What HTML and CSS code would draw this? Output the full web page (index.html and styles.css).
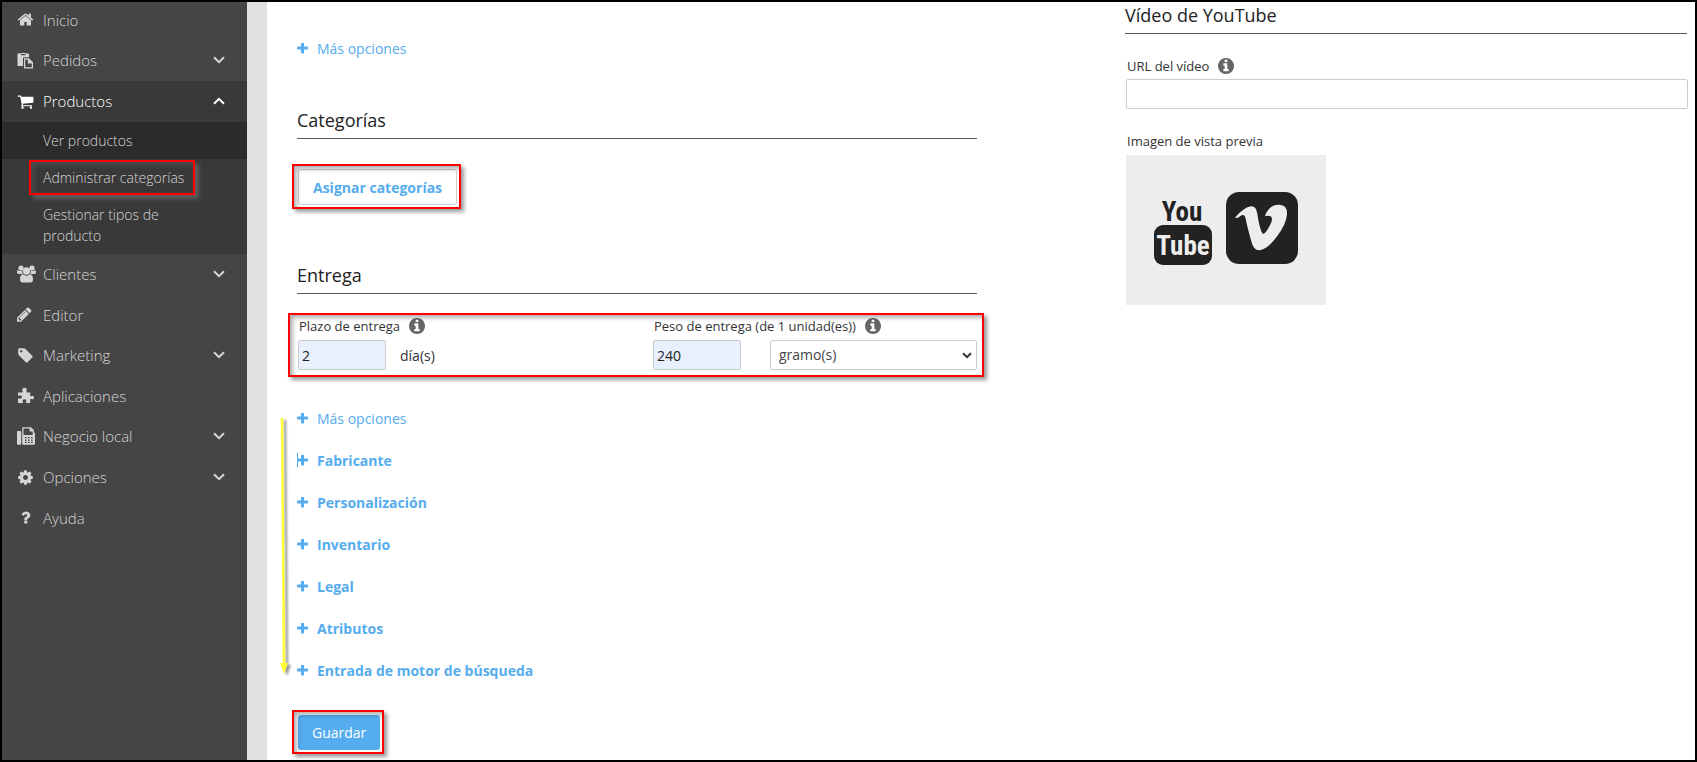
FILE: index.html
```
<!DOCTYPE html>
<html lang="es">
<head>
    <meta charset="UTF-8">
    <meta name="viewport" content="width=device-width, initial-scale=1.0">
    <title>Productos</title>
    <link rel="stylesheet" href="styles.css">
</head>
<body>

<!-- Iconos compartidos -->
<svg class="sprite" aria-hidden="true">
    <symbol id="plus" viewBox="192 192 1408 1408"><path d="M1600 736v192q0 40-28 68t-68 28h-416v416q0 40-28 68t-68 28h-192q-40 0-68-28t-28-68v-416h-416q-40 0-68-28t-28-68v-192q0-40 28-68t68-28h416v-416q0-40 28-68t68-28h192q40 0 68 28t28 68v416h416q40 0 68 28t28 68z"/></symbol>
    <symbol id="info" viewBox="128 128 1536 1536"><path d="M1152 1376v-160q0-14-9-23t-23-9h-96v-512q0-14-9-23t-23-9h-320q-14 0-23 9t-9 23v160q0 14 9 23t23 9h96v320h-96q-14 0-23 9t-9 23v160q0 14 9 23t23 9h448q14 0 23-9t9-23zm-128-896v-160q0-14-9-23t-23-9h-192q-14 0-23 9t-9 23v160q0 14 9 23t23 9h192q14 0 23-9t9-23zm640 416q0 209-103 385.500t-279.500 279.500-385.500 103-385.500-103-279.500-279.500-103-385.500 103-385.500 279.500-279.500 385.500-103 385.500 103 279.500 279.500 103 385.500z"/></symbol>
    <symbol id="down" viewBox="0 0 12 8"><path d="M1 1.200l5 5 5-5" fill="none" stroke="currentColor" stroke-width="2"/></symbol>
    <symbol id="up" viewBox="0 0 12 8"><path d="M1 6.800l5-5 5 5" fill="none" stroke="currentColor" stroke-width="2"/></symbol>
</svg>

<div class="app">
    <nav class="sidebar">
        <ul class="menu">
            <li><a href="#">
                <svg class="icon" viewBox="0 0 1792 1792"><path d="M1472 992v480q0 26-19 45t-45 19h-384v-384h-256v384h-384q-26 0-45-19t-19-45v-480q0-1 .5-3t.5-3l575-474 575 474q1 2 1 6zm223-69l-62 74q-8 9-21 11h-3q-13 0-21-7l-692-577-692 577q-12 8-24 7-13-2-21-11l-62-74q-8-10-7-23.500t11-21.500l719-599q32-26 76-26t76 26l244 204v-195q0-14 9-23t23-9h192q14 0 23 9t9 23v408l219 182q10 8 11 21.500t-7 23.500z"/></svg>
                <span>Inicio</span>
            </a></li>
            <li><a href="#" class="has-sub">
                <svg class="icon" viewBox="0 0 17 17"><path fill-rule="evenodd" d="M.5 1.500h3V1h5v.5h3q.5 0 .5.600V5.200H7q-1 0-1 1V14H1.100q-.6 0-.6-.6zM4 2v1.200h4.500V2zM7 6.200h5l4 4v5.700q0 .6-.6.600H7.600q-.6 0-.6-.6zM8.200 7.400v7.900h6.600V11.400H11.400q-.6 0-.6-.6V7.400z"/></svg>
                <span>Pedidos</span>
                <svg class="chevron"><use href="#down"/></svg>
            </a></li>
            <li class="open"><a href="#" class="has-sub">
                <svg class="icon" viewBox="0 0 1792 1792"><path d="M704 1536q0 52-38 90t-90 38-90-38-38-90 38-90 90-38 90 38 38 90zm896 0q0 52-38 90t-90 38-90-38-38-90 38-90 90-38 90 38 38 90zm128-1088v512q0 24-16.500 42.500t-40.500 21.500l-1044 122q13 60 13 70 0 16-24 64h920q26 0 45 19t19 45-19 45-45 19h-1024q-26 0-45-19t-19-45q0-11 8-31.500t16-36 21.500-40 15.500-29.500l-177-823h-204q-26 0-45-19t-19-45 19-45 45-19h256q16 0 28.500 6.500t19.500 15.500 13 24.500 8 26 5.500 29.500 4.500 26h1201q26 0 45 19t19 45z"/></svg>
                <span>Productos</span>
                <svg class="chevron"><use href="#up"/></svg>
            </a>
                <ul class="submenu">
                    <li class="current"><a href="#">Ver productos</a></li>
                    <li><a href="#"><span class="mark mark-menu">Administrar categorías</span></a></li>
                    <li><a href="#">Gestionar tipos de producto</a></li>
                </ul>
            </li>
            <li><a href="#" class="has-sub">
                <svg class="icon wide" viewBox="0 0 19 18"><circle cx="4" cy="3" r="2.600"/><circle cx="15" cy="3" r="2.600"/><path d="M1.800 5.500Q4 6.600 5.200 5.400q-.5 2 .8 3.600H2Q0 9 0 7.500q0-1.800.8-2.400.4-.2 1 .4zM17.200 5.500Q15 6.600 13.800 5.400q.5 2-.8 3.600H17q2 0 2-1.500 0-1.800-.8-2.400-.4-.2-1 .4z"/><circle cx="9.500" cy="6" r="3.700"/><path d="M6 9.300Q9.500 12 13 9.300q3 .2 3 5.200 0 3-2.500 3h-8q-2.500 0-2.500-3 0-5 3-5.200z"/></svg>
                <span>Clientes</span>
                <svg class="chevron"><use href="#down"/></svg>
            </a></li>
            <li><a href="#">
                <svg class="icon" viewBox="128 0 1792 1792"><path d="M491 1536l91-91-235-235-91 91v107h128v128h107zm523-928q0-22-22-22-10 0-17 7l-542 542q-7 7-7 17 0 22 22 22 10 0 17-7l542-542q7-7 7-17zm-54-192l416 416-832 832h-416v-416zm683 96q0 53-37 90l-166 166-416-416 166-165q36-38 90-38 53 0 91 38l235 234q37 39 37 91z"/></svg>
                <span>Editor</span>
            </a></li>
            <li><a href="#" class="has-sub">
                <svg class="icon" viewBox="0 0 1792 1792"><path d="M576 448q0-53-37.500-90.500t-90.500-37.500-90.500 37.500-37.500 90.500 37.500 90.500 90.500 37.500 90.500-37.500 37.500-90.500zm1067 576q0 53-37 90l-491 492q-39 37-91 37-53 0-90-37l-715-716q-38-37-64.500-101t-26.500-117v-416q0-52 38-90t90-38h416q53 0 117 26.500t102 64.500l715 714q37 39 37 91z"/></svg>
                <span>Marketing</span>
                <svg class="chevron"><use href="#down"/></svg>
            </a></li>
            <li><a href="#">
                <svg class="icon" viewBox="0 0 17 17"><path d="M1 5.500h4.200q1-.4.300-1.500Q4.600 1 7.400.7q3 .2 2.300 2.900-.8 1.500.2 1.900h3.300v3.100q.5 1.200 1.600.4 2.100-.8 2.200 1.500-.1 2.500-2.400 1.600-1.200-.6-1.400.5v3.400H9.400q-1-.4-.3-1.600.8-2.100-1.600-2.200-2.500.2-1.700 2.200.8 1.200-.2 1.600H1v-4.300q.4-.8 1.600-.1Q4.700 12 4.900 10 4.700 8 2.600 8.400 1.300 9.100 1 8.300z"/></svg>
                <span>Aplicaciones</span>
            </a></li>
            <li><a href="#" class="has-sub">
                <svg class="icon wide" viewBox="0 0 19 18"><path fill-rule="evenodd" d="M1 4h2.300q.9 0 .9.900v12q0 .9-.9.900H1Q0 17.800 0 16.800V5q0-1 1-1zM5.200 1q0-.8.800-.8h8l3 3V5.400q1 .4 1 1.400v9.700q0 1.300-1.300 1.300H6.500q-1.300 0-1.300-1.300zM6.500 1.500V8h9.200V4.600h-2.500q-.6 0-.6-.6V1.500zM8 10v1.300h1.700V10zM11 10v1.300h1.700V10zM14 10v1.300h1.700V10zM8 12.400v1.300h1.700v-1.300zM11 12.400v1.300h1.700v-1.300zM14 12.400v1.300h1.700v-1.300zM8 14.800v1.300h1.700v-1.300zM11 14.800v1.300h1.700v-1.300zM14 14.800v1.300h1.700v-1.300z"/></svg>
                <span>Negocio local</span>
                <svg class="chevron"><use href="#down"/></svg>
            </a></li>
            <li><a href="#" class="has-sub">
                <svg class="icon" viewBox="0 0 1792 1792"><path d="M1152 896q0-106-75-181t-181-75-181 75-75 181 75 181 181 75 181-75 75-181zm512-109v222q0 12-8 23t-20 13l-185 28q-19 54-39 91 35 50 107 138 10 12 10 25t-9 23q-27 37-99 108t-94 71q-12 0-26-9l-138-108q-44 23-91 38-16 136-29 186-7 28-36 28h-222q-14 0-24.500-8.500t-11.500-21.500l-28-184q-49-16-90-37l-141 107q-10 9-25 9-14 0-25-11-126-114-165-168-7-10-7-23 0-12 8-23 15-21 51-66.500t54-70.500q-27-50-41-99l-183-27q-13-2-21-12.500t-8-23.500v-222q0-12 8-23t19-13l186-28q14-46 39-92-40-57-107-138-10-12-10-24 0-10 9-23 26-36 98.500-107.500t94.500-71.500q13 0 26 10l138 107q44-23 91-38 16-136 29-186 7-28 36-28h222q14 0 24.500 8.500t11.500 21.500l28 184q49 16 90 37l142-107q9-9 24-9 13 0 25 10 129 119 165 170 7 8 7 22 0 12-8 23-15 21-51 66.500t-54 70.500q26 50 41 98l183 28q13 2 21 12.500t8 23.500z"/></svg>
                <span>Opciones</span>
                <svg class="chevron"><use href="#down"/></svg>
            </a></li>
            <li><a href="#">
                <svg class="icon" viewBox="0 0 1792 1792"><path d="M1088 1256v240q0 16-12 28t-28 12h-240q-16 0-28-12t-12-28v-240q0-16 12-28t28-12h240q16 0 28 12t12 28zm316-600q0 54-15.500 101t-35 76.500-55 59.500-57.500 43.500-61 35.500q-41 23-68.500 65t-27.500 67q0 17-12 32.500t-28 15.500h-240q-15 0-25.500-18.500t-10.500-37.500v-45q0-83 65-156.500t143-108.500q59-27 84-56t25-76q0-42-46.500-74t-107.500-32q-65 0-108 29-35 25-107 115-13 16-31 16-12 0-25-8l-164-125q-13-10-15.500-25t5.500-28q160-266 464-266 80 0 161 31t146 83 106 127.500 41 158.500z"/></svg>
                <span>Ayuda</span>
            </a></li>
        </ul>
    </nav>

    <main class="content">
        <form class="product-form">
            <a href="#" class="more"><svg class="plus"><use href="#plus"/></svg>Más opciones</a>

            <h2>Categorías</h2>
            <div class="mark mark-button">
                <button type="button" class="btn-outline">Asignar categorías</button>
            </div>

            <h2 class="title-delivery">Entrega</h2>
            <div class="delivery mark">
                <div class="field">
                    <div class="label-row">
                        <label for="deliveryTime">Plazo de entrega</label>
                        <svg class="info"><use href="#info"/></svg>
                    </div>
                    <div class="inputs">
                        <input type="text" class="short" id="deliveryTime" value="2">
                        <span>día(s)</span>
                    </div>
                </div>
                <div class="field">
                    <div class="label-row">
                        <label for="deliveryWeight">Peso de entrega (de 1 unidad(es))</label>
                        <svg class="info"><use href="#info"/></svg>
                    </div>
                    <div class="inputs weight">
                        <input type="text" class="short" id="deliveryWeight" value="240">
                        <div class="select-wrap">
                            <select id="weightUnit" aria-label="Unidad de peso">
                                <option>gramo(s)</option>
                                <option>kilogramo(s)</option>
                            </select>
                            <svg class="select-arrow" viewBox="0 0 10 7"><path d="M1 1.200l4 4 4-4" fill="none" stroke="currentColor" stroke-width="2"/></svg>
                        </div>
                    </div>
                </div>
            </div>

            <div class="sections">
                <svg class="arrow" viewBox="0 0 14 262">
                    <path d="M3 1L5 248" stroke="#ffff33" stroke-width="2.500"/>
                    <path d="M1 246h8l-4 11z" fill="#ffff33"/>
                </svg>
                <a href="#" class="more"><svg class="plus"><use href="#plus"/></svg>Más opciones</a>
                <a href="#" class="more bold caret"><svg class="plus"><use href="#plus"/></svg>Fabricante</a>
                <a href="#" class="more bold"><svg class="plus"><use href="#plus"/></svg>Personalización</a>
                <a href="#" class="more bold"><svg class="plus"><use href="#plus"/></svg>Inventario</a>
                <a href="#" class="more bold"><svg class="plus"><use href="#plus"/></svg>Legal</a>
                <a href="#" class="more bold"><svg class="plus"><use href="#plus"/></svg>Atributos</a>
                <a href="#" class="more bold"><svg class="plus"><use href="#plus"/></svg>Entrada de motor de búsqueda</a>
            </div>

            <div class="mark mark-button">
                <button type="submit" class="btn-save">Guardar</button>
            </div>
        </form>

        <section class="video">
            <h2>Vídeo de YouTube</h2>
            <div class="label-row">
                <label for="videoUrl">URL del vídeo</label>
                <svg class="info"><use href="#info"/></svg>
            </div>
            <input type="text" id="videoUrl">
            <p class="preview-title">Imagen de vista previa</p>
            <div class="preview">
                <svg viewBox="0 0 200 150" role="img" aria-label="YouTube y Vimeo">
                    <text class="logo-you" x="56" y="66" text-anchor="middle">You</text>
                    <rect x="28" y="70" width="58" height="40" rx="9" fill="#222"/>
                    <text class="logo-tube" x="57" y="100" text-anchor="middle">Tube</text>
                    <rect x="100" y="37" width="72" height="72" rx="13" fill="#222"/>
                    <path d="M109 62.500Q118 52 125 51.200q5-.5 6.300 7.300 2.200 15.500 5.200 20 1.500 1.500 5-4 4.500-7 4.500-10.500-.3-4-5.500-3-1-.2-1.500-.2 4.500-11.500 14.500-11 8 .5 7.500 9.500-.5 10-11 23.500-9 11.500-16.500 12.500-6 .5-8.500-10-4-14.500-5-20-1-6-3.500-5.300-1 .2-5 3z" fill="#ededed"/>
                </svg>
            </div>
        </section>
    </main>
</div>

</body>
</html>
```
FILE: styles.css
```
* {
    box-sizing: border-box;
}
body {
    margin: 0;
    font-family: "Open Sans", sans-serif;
    font-size: 14px;
    color: #333;
    background-color: #fff;
}
/* Marco negro alrededor de la ventana */
body::after {
    content: "";
    position: fixed;
    inset: 0;
    border: 2px solid #000;
    pointer-events: none;
}
.sprite {
    display: none;
}
svg {
    fill: currentColor;
    flex: none;
}
a {
    text-decoration: none;
}
.app {
    display: flex;
    min-height: 100vh;
}

/* Menu lateral */
.sidebar {
    width: 247px;
    flex: none;
    background-color: #454545;
    font-size: 15px;
    font-weight: 300;
}
.menu, .submenu {
    list-style: none;
    margin: 0;
    padding: 0;
}
.menu a {
    display: flex;
    align-items: center;
    height: 40px;
    padding: 0 22px 1px 17px;
    color: #d5d5d5;
}
.menu a.has-sub {
    height: 41px;
}
.icon {
    width: 17px;
    height: 17px;
    margin-right: 9px;
}
.icon.wide {
    width: 19px;
    height: 18px;
    margin-right: 7px;
}
.chevron {
    width: 12px;
    height: 8px;
    margin-left: auto;
}
.menu .open {
    background-color: #393939;
}
.menu .open > a {
    color: #fff;
}
.menu .submenu a {
    display: block;
    height: auto;
    padding: 8px 60px 8px 43px;
    font-size: 14px;
    line-height: 21px;
}
.menu .submenu .current {
    background-color: #2b2b2b;
}

/* Recuadros rojos */
.mark {
    position: relative;
}
.mark::after {
    content: "";
    position: absolute;
    inset: -5px -6px;
    border: 2px solid #f00;
    box-shadow: 3px 3px 4px rgba(0, 0, 0, 0.4), inset 3px 3px 4px rgba(0, 0, 0, 0.3);
    pointer-events: none;
}
.mark-menu {
    white-space: nowrap;
}
.mark-menu::after {
    inset: -8px -11px -8px -14px;
    box-shadow: 4px 4px 4px rgba(120, 120, 120, 0.6), inset 4px 4px 4px rgba(110, 110, 110, 0.3);
}
.mark-button {
    align-self: flex-start;
    margin-left: 1px;
}
.mark-button::after {
    inset: -5px -4px -4px -6px;
}

/* Contenido */
.content {
    flex: 1;
    display: grid;
    grid-template-columns: 680fr 562fr;
    gap: 148px;
    padding: 0 10px 0 30px;
    border-left: 20px solid #e0e0e0;
}
.product-form {
    display: flex;
    flex-direction: column;
    padding-top: 27px;
}
h2 {
    margin: 0;
    padding-bottom: 6px;
    font-size: 18px;
    font-weight: 400;
    line-height: 24px;
    color: #222;
    border-bottom: 1px solid #555;
}
.more {
    display: flex;
    align-items: center;
    height: 42px;
    color: #55acee;
}
.bold {
    font-weight: 700;
}
.plus {
    width: 11px;
    height: 11px;
    margin-right: 9px;
}
.caret {
    position: relative;
}
.caret::before {
    content: "";
    position: absolute;
    left: 0;
    top: 14px;
    width: 1px;
    height: 14px;
    background-color: #55acee;
}
.more + h2 {
    margin-top: 39px;
}
button {
    font-family: inherit;
    font-size: 14px;
    border-radius: 3px;
    cursor: pointer;
}
.btn-outline {
    display: block;
    height: 36px;
    padding: 0 14px;
    font-weight: 700;
    color: #55acee;
    background-color: #fff;
    border: 1px solid #ccc;
}
.btn-save {
    display: block;
    height: 35px;
    padding: 0 14px;
    color: #fff;
    background-color: #55acee;
    border: none;
}
h2 + .mark-button {
    margin-top: 30px;
}
.title-delivery {
    margin-top: 58px;
}
.delivery {
    display: grid;
    grid-template-columns: 355fr 324fr;
    margin-top: 24px;
    padding-left: 1px;
}
.delivery::after {
    inset: -5px -7px -7px -9px;
}
.label-row {
    display: flex;
    align-items: center;
    gap: 9px;
    height: 16px;
    padding-left: 1px;
    font-size: 13px;
}
.info {
    width: 16px;
    height: 16px;
    color: #666;
}
.inputs {
    display: flex;
    align-items: center;
    gap: 14px;
    margin-top: 6px;
}
.inputs.weight {
    gap: 29px;
}
input, select {
    width: 100%;
    height: 30px;
    font-family: inherit;
    font-size: 14px;
    color: #222;
    background-color: #fff;
    border: 1px solid #ccc;
    border-radius: 2px;
}
input {
    padding: 0 3px;
}
.short {
    flex: none;
    width: 88px;
    background-color: #e8f0fe;
}
.select-wrap {
    position: relative;
    flex: 1;
}
select {
    display: block;
    padding: 0 8px 2px;
    appearance: none;
    color: #444;
}
.select-arrow {
    position: absolute;
    right: 5px;
    top: 12px;
    width: 10px;
    height: 7px;
    pointer-events: none;
}

/* Secciones plegadas */
.sections {
    position: relative;
    margin-top: 27px;
}
.arrow {
    position: absolute;
    left: -18px;
    top: 20px;
    width: 14px;
    height: 262px;
    filter: drop-shadow(3px 2px 1px rgba(0, 0, 0, 0.4));
}
.sections + .mark-button {
    margin-top: 24px;
}

/* Video */
.video h2 {
    padding-top: 3px;
}
.video .label-row {
    margin-top: 24px;
    padding-left: 2px;
}
.video input {
    margin-top: 5px;
    margin-left: 1px;
}
.preview-title {
    margin: 22px 0 4px;
    padding-left: 2px;
    font-size: 13px;
    line-height: 20px;
}
.preview {
    width: 200px;
    height: 150px;
    margin-left: 1px;
    background-color: #ededed;
}
.preview svg {
    display: block;
}
.logo-you, .logo-tube {
    font-family: "Roboto Condensed", "Liberation Sans Narrow", "Open Sans", sans-serif;
    font-weight: 700;
    font-size: 27px;
    fill: #222;
}
.logo-tube {
    fill: #ededed;
}
```
